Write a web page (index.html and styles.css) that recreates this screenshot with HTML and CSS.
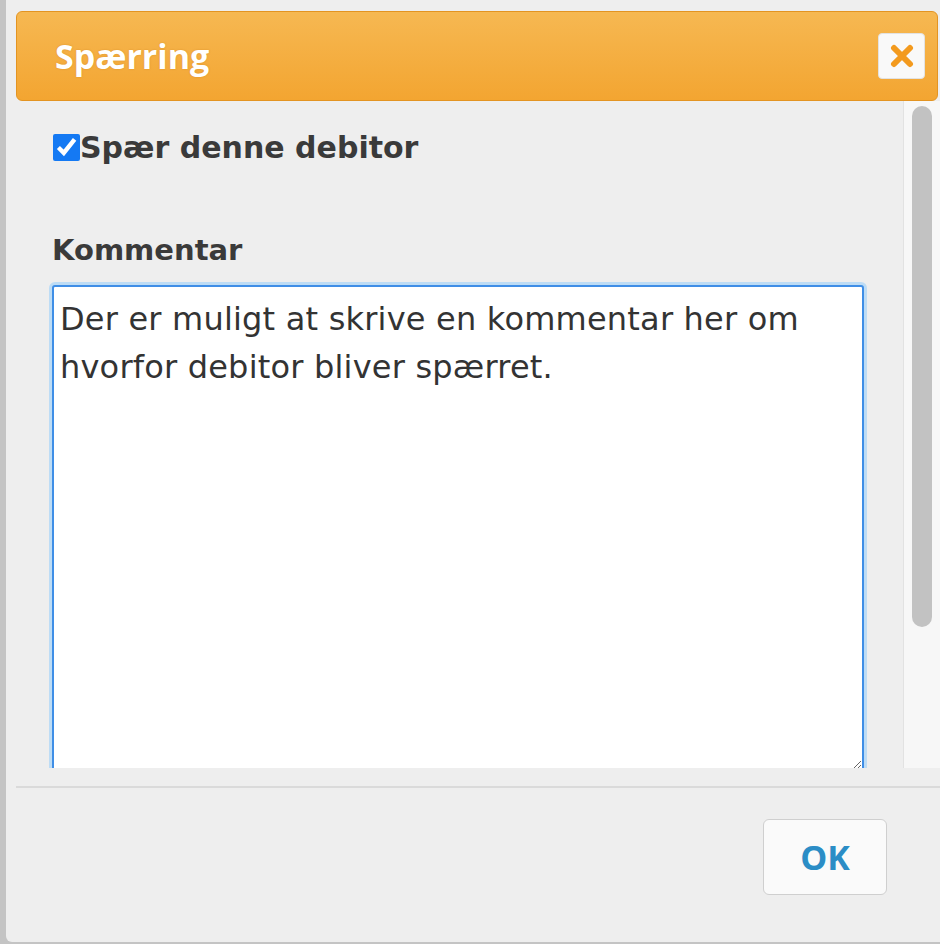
FILE: index.html
```html
<!DOCTYPE html>
<html lang="da">
<head>
    <meta charset="UTF-8">
    <meta name="viewport" content="width=device-width, initial-scale=1.0">
    <title>Spærring</title>
    <link rel="stylesheet" href="styles.css">
</head>
<body>
    <div class="dialog">
        <div class="titlebar">
            <span class="title">Spærring</span>
            <button class="close" title="Luk">
                <svg width="24" height="24" viewBox="0 0 24 24">
                    <path d="M4 4 L20 20 M20 4 L4 20" stroke="#f39a1e" stroke-width="6" stroke-linecap="round"/>
                </svg>
            </button>
        </div>

        <div class="content">
            <div class="content-inner">
                <label class="check-row">
                    <input type="checkbox" id="spaerCheck" checked>
                    <span>Spær denne debitor</span>
                </label>
                <div class="field-label">Kommentar</div>
                <textarea id="kommentar">Der er muligt at skrive en kommentar her om hvorfor debitor bliver spærret.</textarea>
            </div>
            <div class="scroll-track">
                <div class="scroll-thumb"></div>
            </div>
        </div>

        <div class="footer">
            <button class="ok-btn">OK</button>
        </div>
    </div>
</body>
</html>
```

FILE: styles.css
```css
body {
    margin: 0;
    padding: 0;
    background-color: #c4c4c4;
    overflow: hidden;
    font-family: "DejaVu Sans", Verdana, sans-serif;
}

.dialog {
    margin-left: 6px;
    width: 934px;
    height: 942px;
    background-color: #eeeeee;
    border-bottom-left-radius: 6px;
    display: flex;
    flex-direction: column;
}

.titlebar {
    margin: 11px 2px 0 10px;
    height: 90px;
    box-sizing: border-box;
    padding: 0 12px 0 38px;
    display: flex;
    align-items: center;
    justify-content: space-between;
    background: linear-gradient(#f6b852, #f3a531);
    border: 1px solid #e39422;
    border-radius: 6px;
}

.title {
    font-family: "Open Sans", sans-serif;
    font-weight: bold;
    font-size: 34px;
    color: #ffffff;
    text-shadow: 0 0 2px rgba(180, 100, 0, 0.4);
}

.close {
    width: 47px;
    height: 46px;
    padding: 0;
    display: flex;
    align-items: center;
    justify-content: center;
    background-color: #f9f9f9;
    border: 1px solid #e2e2e2;
    border-radius: 4px;
    cursor: pointer;
}

.content {
    height: 667px;
    display: flex;
    overflow: hidden;
    color: #3a3a3a;
}

.content-inner {
    flex: 1;
    padding: 32px 0 0 46px;
}

.scroll-track {
    width: 37px;
    box-sizing: border-box;
    padding: 5px 8px 0 8px;
    background-color: #f7f7f7;
    border-left: 1px solid #e2e2e2;
}

.scroll-thumb {
    height: 521px;
    background-color: #c2c2c2;
    border-radius: 10px;
}

.check-row {
    display: flex;
    align-items: center;
    height: 28px;
    font-weight: bold;
    font-size: 30px;
}

.check-row input {
    width: 27px;
    height: 27px;
    margin: 0 0 0 1px;
    accent-color: #1479f3;
}

.field-label {
    margin-top: 72px;
    font-weight: bold;
    font-size: 29px;
    line-height: 34px;
}

textarea {
    display: block;
    margin-top: 18px;
    width: 812px;
    height: 486px;
    box-sizing: border-box;
    padding: 8px 6px;
    border: 2px solid #3f8ee6;
    border-radius: 3px;
    box-shadow: 0 0 0 3px #bddcf5;
    outline: none;
    resize: vertical;
    font-family: "DejaVu Sans", Verdana, sans-serif;
    font-size: 32px;
    letter-spacing: 0.2px;
    line-height: 48px;
    color: #333333;
    background-color: #ffffff;
}

.footer {
    margin: 18px 0 0 10px;
    border-top: 2px solid #dadada;
    padding: 31px 53px 0 0;
    display: flex;
    justify-content: flex-end;
}

.ok-btn {
    width: 124px;
    height: 76px;
    background-color: #fafafa;
    border: 1px solid #cfcfcf;
    border-radius: 6px;
    color: #2b8dc6;
    font-family: "Open Sans", sans-serif;
    font-weight: bold;
    font-size: 34px;
    cursor: pointer;
}
```
